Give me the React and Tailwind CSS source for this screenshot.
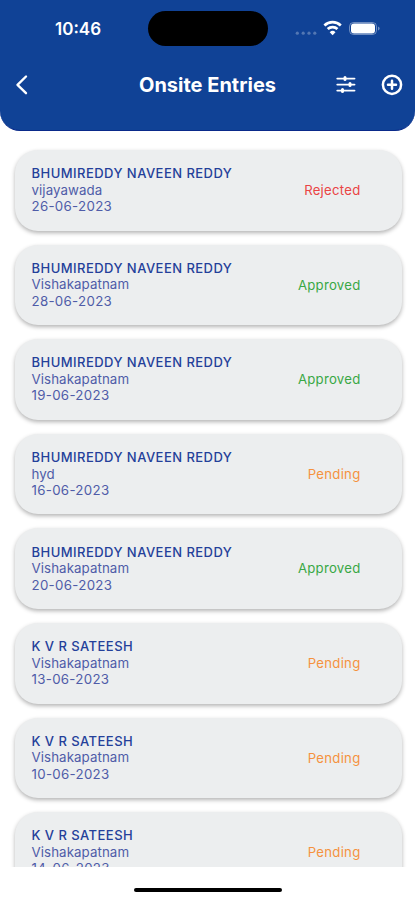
import React from 'react';

const entries = [
  { id: 1, name: 'BHUMIREDDY NAVEEN REDDY', place: 'vijayawada', date: '26-06-2023', status: 'Rejected' },
  { id: 2, name: 'BHUMIREDDY NAVEEN REDDY', place: 'Vishakapatnam', date: '28-06-2023', status: 'Approved' },
  { id: 3, name: 'BHUMIREDDY NAVEEN REDDY', place: 'Vishakapatnam', date: '19-06-2023', status: 'Approved' },
  { id: 4, name: 'BHUMIREDDY NAVEEN REDDY', place: 'hyd', date: '16-06-2023', status: 'Pending' },
  { id: 5, name: 'BHUMIREDDY NAVEEN REDDY', place: 'Vishakapatnam', date: '20-06-2023', status: 'Approved' },
  { id: 6, name: 'K V R SATEESH', place: 'Vishakapatnam', date: '13-06-2023', status: 'Pending' },
  { id: 7, name: 'K V R SATEESH', place: 'Vishakapatnam', date: '10-06-2023', status: 'Pending' },
  { id: 8, name: 'K V R SATEESH', place: 'Vishakapatnam', date: '14-06-2023', status: 'Pending' },
];

const statusColors = {
  Rejected: 'text-[#ea4444]',
  Approved: 'text-[#39a845]',
  Pending: 'text-[#f5923e]',
};

function StatusBar() {
  return (
    <div className="flex h-[58px] items-start">
      <span className="mt-[17px] ml-[55px] w-[93px] text-[17px] leading-6 font-semibold">10:46</span>
      <div className="mt-[11px] h-[35px] w-[120px] rounded-full bg-black" />
      <svg className="mt-[18px] ml-[26px]" width="88" height="22" viewBox="0 0 88 22" fill="none">
        <g fill="#fff" opacity="0.28">
          <circle cx="3.3" cy="15.2" r="1.6" />
          <circle cx="9.2" cy="15.2" r="1.6" />
          <circle cx="15" cy="15.2" r="1.6" />
          <circle cx="20.8" cy="15.2" r="1.6" />
        </g>
        <g stroke="#fff" strokeWidth="2.7">
          <path d="M30.4 7.4a12 12 0 0 1 16.4 0" />
          <path d="M33.7 11.1a7.2 7.2 0 0 1 9.8 0" />
        </g>
        <path d="M38.6 17.2 35.7 14.2a4.1 4.1 0 0 1 5.8 0Z" fill="#fff" />
        <rect x="55.5" y="4.5" width="27" height="12" rx="4" stroke="#fff" opacity="0.4" />
        <rect x="57" y="5.5" width="24" height="10" rx="3" fill="#fff" />
        <path d="M84.2 8.5v4a2.2 2.2 0 0 0 0-4Z" fill="#fff" opacity="0.5" />
      </svg>
    </div>
  );
}

function Header() {
  return (
    <header className="h-[130.5px] shrink-0 rounded-b-[20px] border-b border-[#0a2a8a] bg-[#104296] text-white">
      <StatusBar />
      <div className="flex h-[53px] items-center">
        <button className="ml-[14px] w-[125px]">
          <svg width="16" height="22" viewBox="0 0 16 22" fill="none" stroke="#fff" strokeWidth="2.4" strokeLinecap="round" strokeLinejoin="round">
            <path d="M12 2.5 3.5 10.8 12 19.2" />
          </svg>
        </button>
        <h1 className="w-[195px] text-[20px] leading-6 font-bold whitespace-nowrap">Onsite Entries</h1>
        <button className="w-[46px]">
          <svg width="24" height="20" viewBox="0 0 24 20" fill="none" stroke="#fff" strokeWidth="1.9" strokeLinecap="round">
            <path d="M3.3 3.6h17.2M3.3 9.6h17.2M3.3 15.6h17.2" />
            <path d="M11 2.6v2M16 8.6v2M8.5 14.6v2" strokeWidth="3" />
          </svg>
        </button>
        <button>
          <svg width="24" height="24" viewBox="0 0 24 24" fill="none" stroke="#fff" strokeWidth="2.5" strokeLinecap="round">
            <circle cx="12" cy="11.8" r="9.1" />
            <path d="M12 7.8v8M8 11.8h8" />
          </svg>
        </button>
      </div>
    </header>
  );
}

function EntryCard({ entry }) {
  return (
    <div className="flex h-[80.6px] shrink-0 items-center justify-between rounded-[23px] bg-[#eceeef] pr-[41px] pl-[17px] shadow-[0_2px_4px_rgba(0,0,0,0.3)]">
      <div className="mt-[-0.5px] text-[13.3px] leading-[16.5px] text-[#4f5ca8]">
        <p className="text-[13px] font-medium tracking-[0.46px] text-[#24409a]">{entry.name}</p>
        <p className="tracking-[0.08px]">{entry.place}</p>
        <p className="tracking-[0.3px]">{entry.date}</p>
      </div>
      <span className={`text-[13.2px] leading-[16.5px] tracking-[0.25px] ${statusColors[entry.status]}`}>{entry.status}</span>
    </div>
  );
}

export default function App() {
  return (
    <div className="flex h-[900px] w-[415px] flex-col overflow-hidden bg-white font-['Inter',sans-serif]">
      <Header />
      <main className="flex h-[736.5px] shrink-0 flex-col gap-[14px] overflow-hidden pt-[19.5px] pr-[13.5px] pl-[14.5px]">
        {entries.map((entry) => (
          <EntryCard key={entry.id} entry={entry} />
        ))}
      </main>
      <div className="mt-[21px] ml-[134px] h-1 w-[148px] rounded-full bg-black" />
    </div>
  );
}
